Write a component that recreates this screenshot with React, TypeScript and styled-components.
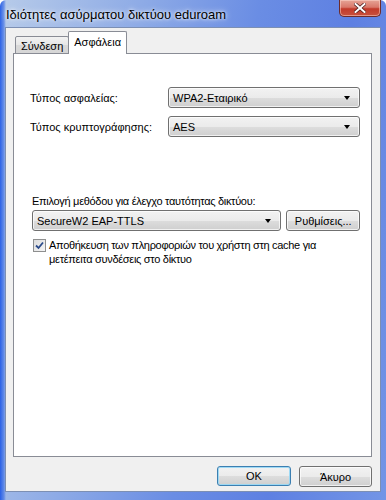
import React from "react";
import styled, { createGlobalStyle } from "styled-components";

const Global = createGlobalStyle`
  html, body { margin: 0; padding: 0; }
  body { width: 386px; height: 500px; overflow: hidden; background: #fff; }
  * { box-sizing: border-box; }
`;

const FONT = `"Liberation Sans", Arial, sans-serif`;

const Frame = styled.div`
  width: 386px;
  height: 500px;
  display: flex;
  flex-direction: column;
  padding: 0 5px 8px 5px;
  font-family: ${FONT};
  background:
    linear-gradient(90deg, rgba(20, 80, 230, 0.85) 0px, rgba(60, 110, 230, 0.6) 4px, rgba(0,0,0,0) 6px),
    linear-gradient(100deg, #b7cbe9 0%, #8eabe6 30%, #6a8de4 55%, #5e80e2 75%, #7395e6 100%);
  border-radius: 6px 6px 0 0;
`;

const TitleBar = styled.div`
  height: 27px;
  display: flex;
  align-items: flex-start;
  justify-content: space-between;
  flex-shrink: 0;
`;

const Title = styled.div`
  font-size: 13px;
  color: #000;
  padding: 7px 0 0 1px;
  text-shadow: 0 0 6px rgba(255, 255, 255, 0.9), 0 0 3px rgba(255, 255, 255, 0.9);
  white-space: nowrap;
`;

const CloseButton = styled.div`
  width: 42px;
  height: 17px;
  border: 1px solid #6d2b2b;
  border-top: none;
  border-radius: 0 0 5px 5px;
  background: linear-gradient(180deg, #e6a496 0%, #d9786a 45%, #c23a2a 55%, #c8513e 100%);
  display: flex;
  align-items: center;
  justify-content: center;
  box-shadow: inset 0 0 0 1px rgba(255, 220, 210, 0.5);
`;

const Client = styled.div`
  flex: 1;
  display: flex;
  flex-direction: column;
  background: #f0f0f0;
  border: 1px solid #7c8fb3;
  padding: 4px 8px 0 7px;
`;

const TabRow = styled.div`
  display: flex;
  align-items: flex-end;
  height: 22px;
  padding-left: 2px;
  position: relative;
  z-index: 1;
  margin-bottom: -1px;
`;

const Tab = styled.div<{ $active?: boolean }>`
  height: ${(p) => (p.$active ? 23 : 18)}px;
  padding: ${(p) => (p.$active ? "4px 5px 0 5px" : "3px 5px 0 5px")};
  font-size: 11px;
  color: #000;
  border: 1px solid #898c95;
  border-bottom: ${(p) => (p.$active ? "none" : "1px solid #898c95")};
  border-radius: 2px 2px 0 0;
  background: ${(p) =>
    p.$active ? "#ffffff" : "linear-gradient(180deg, #f2f2f2 0%, #e6e6e6 50%, #d9d9d9 51%, #d6d6d6 100%)"};
  margin-left: ${(p) => (p.$active ? "-1px" : "0")};
  white-space: nowrap;
`;

const Panel = styled.div`
  height: 404px;
  background: #fff;
  border: 1px solid #898c95;
  display: flex;
  flex-direction: column;
  padding: 33px 11px 0 16px;
`;

const FieldRow = styled.div`
  display: flex;
  align-items: center;
  height: 21px;
  margin-bottom: 8px;
`;

const Label = styled.div`
  font-size: 11px;
  color: #000;
  width: 138px;
  flex-shrink: 0;
  white-space: nowrap;
`;

const Combo = styled.div<{ $width?: number }>`
  ${(p) => (p.$width ? `width: ${p.$width}px;` : "flex: 1;")}
  height: 21px;
  border: 1px solid #707070;
  border-radius: 3px;
  background: linear-gradient(180deg, #f2f2f2 0%, #ebebeb 50%, #dddddd 51%, #cfcfcf 100%);
  display: flex;
  align-items: center;
  justify-content: space-between;
  padding: 0 9px 0 4px;
  font-size: 11px;
  color: #000;
  box-shadow: inset 0 0 0 1px rgba(255, 255, 255, 0.7);
`;

const Arrow = styled.span`
  width: 0;
  height: 0;
  border-left: 3.5px solid transparent;
  border-right: 3.5px solid transparent;
  border-top: 4px solid #000;
`;

const SectionLabel = styled.div`
  font-size: 11px;
  letter-spacing: -0.3px;
  color: #000;
  margin-top: 48px;
  margin-left: 2px;
  height: 17px;
  line-height: 17px;
  white-space: nowrap;
`;

const MethodRow = styled.div`
  display: flex;
  align-items: center;
  gap: 5px;
  margin-left: 2px;
`;

const Button = styled.div<{ $default?: boolean; $width: number }>`
  width: ${(p) => p.$width}px;
  height: ${(p) => (p.$default ? 20 : 21)}px;
  border: 1px solid ${(p) => (p.$default ? "#3c7fb1" : "#707070")};
  border-radius: 3px;
  background: linear-gradient(180deg, #f2f2f2 0%, #ebebeb 50%, #dddddd 51%, #cfcfcf 100%);
  display: flex;
  align-items: center;
  justify-content: center;
  font-size: 11px;
  color: #000;
  box-shadow: inset 0 0 0 1px ${(p) => (p.$default ? "rgba(150, 215, 245, 0.9)" : "rgba(255,255,255,0.7)")};
`;

const CheckRow = styled.div`
  display: flex;
  align-items: flex-start;
  gap: 3px;
  margin-top: 7px;
  margin-left: 3px;
`;

const CheckBox = styled.div`
  width: 13px;
  height: 13px;
  flex-shrink: 0;
  margin-top: 1px;
  border: 1px solid #8e8f8f;
  background: linear-gradient(135deg, #dcdcdc 0%, #f5f5f5 100%);
  display: flex;
  align-items: center;
  justify-content: center;
`;

const CheckText = styled.div`
  font-size: 11px;
  letter-spacing: -0.3px;
  line-height: 14px;
  color: #000;
`;

const Footer = styled.div`
  display: flex;
  justify-content: flex-end;
  gap: 8px;
  padding-top: 9px;
`;

export default function App() {
  return (
    <>
      <Global />
      <Frame>
        <TitleBar>
          <Title>Ιδιότητες ασύρματου δικτύου eduroam</Title>
          <CloseButton>
            <svg width="12" height="10" viewBox="0 0 12 10">
              <path d="M1.5 1 L10.5 9 M10.5 1 L1.5 9" stroke="#4a1a1a" strokeWidth="3.4" strokeLinecap="square" />
              <path d="M1.5 1 L10.5 9 M10.5 1 L1.5 9" stroke="#ffffff" strokeWidth="2" strokeLinecap="square" />
            </svg>
          </CloseButton>
        </TitleBar>
        <Client>
          <TabRow>
            <Tab>Σύνδεση</Tab>
            <Tab $active>Ασφάλεια</Tab>
          </TabRow>
          <Panel>
            <FieldRow>
              <Label>Τύπος ασφαλείας:</Label>
              <Combo>
                <span>WPA2-Εταιρικό</span>
                <Arrow />
              </Combo>
            </FieldRow>
            <FieldRow>
              <Label>Τύπος κρυπτογράφησης:</Label>
              <Combo>
                <span>AES</span>
                <Arrow />
              </Combo>
            </FieldRow>
            <SectionLabel>Επιλογή μεθόδου για έλεγχο ταυτότητας δικτύου:</SectionLabel>
            <MethodRow>
              <Combo $width={251}>
                <span>SecureW2 EAP-TTLS</span>
                <Arrow />
              </Combo>
              <Button $width={74}>Ρυθμίσεις...</Button>
            </MethodRow>
            <CheckRow>
              <CheckBox>
                <svg width="9" height="9" viewBox="0 0 9 9">
                  <path d="M1 4.5 L3.5 7 L8 1.5" stroke="#2a4a8a" strokeWidth="1.8" fill="none" />
                </svg>
              </CheckBox>
              <CheckText>
                Αποθήκευση των πληροφοριών του χρήστη στη cache για
                <br />
                μετέπειτα συνδέσεις στο δίκτυο
              </CheckText>
            </CheckRow>
          </Panel>
          <Footer>
            <Button $default $width={74}>OK</Button>
            <Button $width={73}>Άκυρο</Button>
          </Footer>
        </Client>
      </Frame>
    </>
  );
}
